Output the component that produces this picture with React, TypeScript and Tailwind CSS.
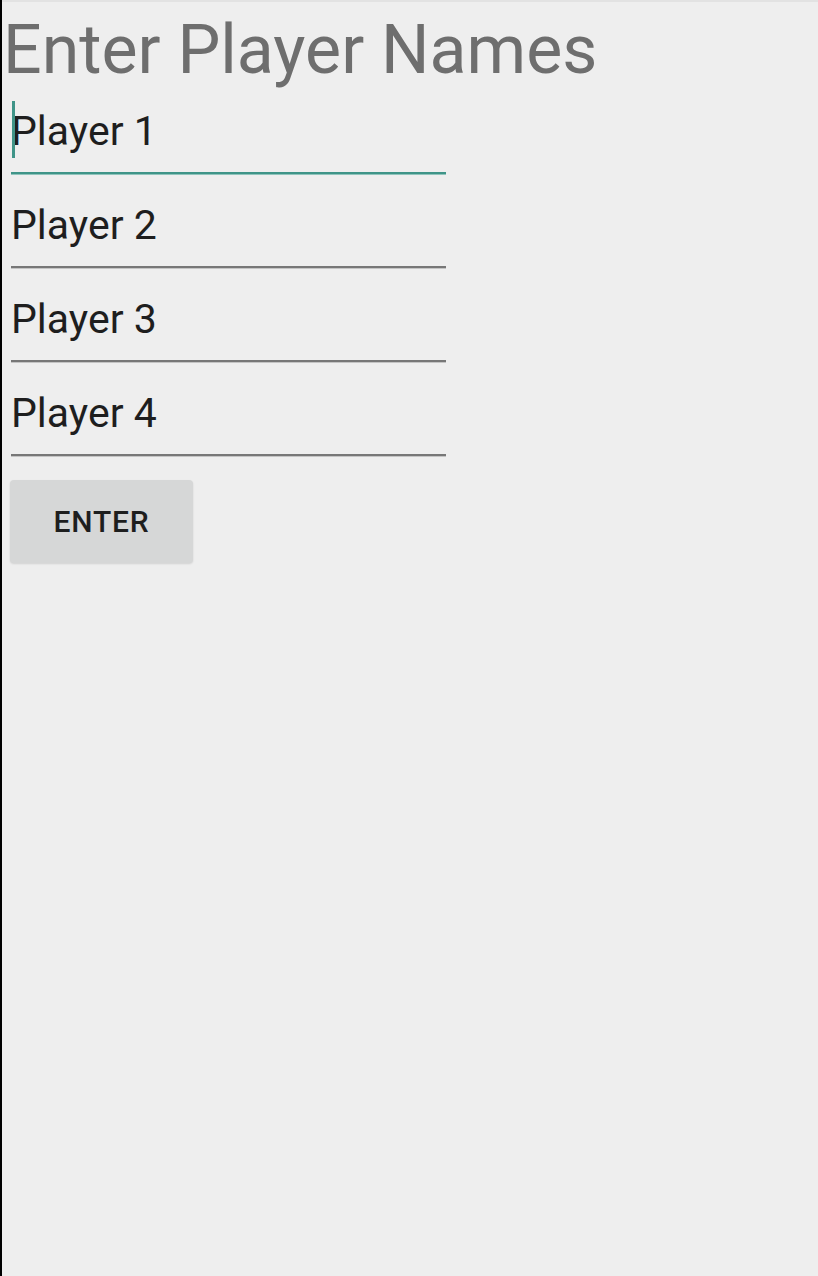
const players = ["Player 1", "Player 2", "Player 3", "Player 4"];

export default function App() {
  return (
    <div
      className="min-h-[1276px] w-[818px] border-l-2 border-black bg-[#eeeeee]"
      style={{ fontFamily: "Roboto, 'Noto Sans', sans-serif" }}
    >
      <div className="h-[2px] bg-[#e2e2e2]" />
      {/* title */}
      <h1 className="mt-[14px] ml-[1px] text-[68px] leading-none font-normal text-[#6e6e6e]">
        Enter Player Names
      </h1>

      <div className="mt-[-4px] ml-[9px] w-[435px]">
        {players.map((name, i) => (
          <div
            key={name}
            className={`relative flex h-[94px] items-end border-b-2 pb-[20px] ${
              i === 0
                ? "border-[#3f9488] shadow-[0_1px_0_#8fc4bc]"
                : "border-[#777777] shadow-[0_1px_0_#c4c4c4]"
            }`}
          >
            {i === 0 && (
              <span className="absolute left-[1px] top-[21px] h-[57px] w-[3px] bg-[#3f9488]" />
            )}
            <span className="text-[41px] leading-none text-[#1e1e1e]">{name}</span>
          </div>
        ))}
      </div>

      <button
        type="button"
        className="mt-[24px] ml-[8px] flex h-[83px] w-[183px] items-center justify-center rounded-[4px] bg-[#d6d7d7] text-[30px] font-medium tracking-[0.8px] text-[#1e1e1e] shadow-[0_1px_2px_rgba(0,0,0,0.12)]"
      >
        ENTER
      </button>
    </div>
  );
}
